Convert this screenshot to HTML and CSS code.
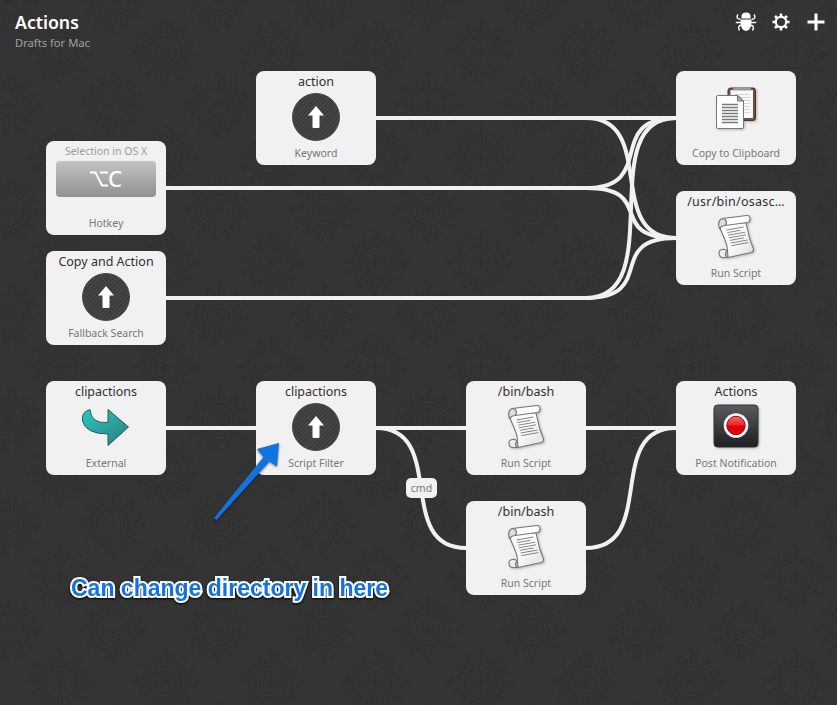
FILE: index.html
```html
<!DOCTYPE html>
<html lang="en">
<head>
<meta charset="utf-8">
<title>Actions</title>
<link rel="stylesheet" href="styles.css">
</head>
<body>
<svg class="backdrop" width="837" height="705" aria-hidden="true">
  <defs>
    <g id="rosette" fill="none" stroke="#2d2d2d">
      <circle r="16" stroke-width="3" stroke-dasharray="2 1.3"/>
      <circle r="11" stroke-width="1"/>
      <circle r="22" stroke-width="6" stroke-dasharray="4 2" opacity=".55"/>
      <circle r="28" stroke-width="5" stroke-dasharray="7 7.7" opacity=".5"/>
      <path d="M-9 0H9M0-9V9M-6-6 6 6M-6 6 6-6M-35 0h9M26 0h9M0-35v9M0 26v9M-33-3l4 3-4 3M33-3l-4 3 4 3M-3-33l3 4 3-4M-3 33l3-4 3 4"/>
      <path d="M-30-20l6 4M-20-30l4 6M30-20l-6 4M20-30l-4 6M-30 20l6-4M-20 30l4-6M30 20l-6-4M20 30l-4-6" opacity=".7"/>
    </g>
    <pattern id="damask" width="105" height="105" x="8" y="0" patternUnits="userSpaceOnUse">
      <use href="#rosette"/><use href="#rosette" x="105"/>
      <use href="#rosette" y="105"/><use href="#rosette" x="105" y="105"/>
      <use href="#rosette" x="52.5" y="52.5"/>
    </pattern>
    <pattern id="stripes" width="3" height="3" patternUnits="userSpaceOnUse" patternTransform="rotate(45)">
      <rect width="3" height="3" fill="#393939"/><rect width="1.2" height="3" fill="#4a4a4a"/>
    </pattern>
    <linearGradient id="paper" x2="1" y2="1"><stop stop-color="#fff"/><stop offset=".55" stop-color="#fafafa"/><stop offset="1" stop-color="#dcdcdc"/></linearGradient>
    <linearGradient id="teal" x2="1" y2="1"><stop stop-color="#2ac5c0"/><stop offset="1" stop-color="#2b7f7c"/></linearGradient>
    <linearGradient id="panel" x2="0" y2="1"><stop stop-color="#5a5b5f"/><stop offset="1" stop-color="#1d1e20"/></linearGradient>
    <linearGradient id="red" x2="0" y2="1"><stop stop-color="#f76b6b"/><stop offset=".48" stop-color="#ee2028"/><stop offset=".52" stop-color="#dc0008"/><stop offset="1" stop-color="#e8000c"/></linearGradient>
    <symbol id="up" viewBox="0 0 48 48">
      <circle cx="24" cy="24" r="23.5" fill="url(#stripes)" stroke="#4b4b4b"/>
      <path d="M24 13l8 9.500h-4.500V34q0 1-1 1h-5q-1 0-1-1V22.500H16z" fill="#fff"/>
    </symbol>
    <symbol id="scroll" viewBox="0 0 48 48">
      <g stroke="#777" stroke-width="1.1" stroke-linejoin="round">
        <path d="M10.500 5.500C5 8 7 13 9 17.500 13 27 16 32 15.500 38L16 44.500 39.500 39.500Q42.500 38 41 34.500 39 30 37.500 25L34 10 13 9z" fill="url(#paper)"/>
        <path d="M15 38C13 35.500 7 36 7 39.500S8 44.500 11 44.500h5c-3-.5-3.500-4.500-1-6.500z" fill="#eee"/>
        <path d="M10.500 5.500 35 2.500c4-.3 4 6 .5 7L13 12.500c2-2 2-6-2.500-7z" fill="#fff"/>
        <path d="M10.500 5.500c4 0 5 5 2.500 7-2 0-4 1-5.500 3-1-3-2-8 3-10z" fill="#ddd"/>
      </g>
      <path d="M14.500 17l17-3M15.300 19.600l13-2.300M16.200 22.200l17-3M17 24.800l17-3M17.800 27.400l14-2.500M18.600 30l17-3M19.300 32.600l17-3" stroke="#777" stroke-width=".9"/>
    </symbol>
  </defs>
  <rect width="837" height="705" fill="url(#damask)"/>
</svg>

<header class="bar">
  <div class="heading">
    <h1>Actions</h1>
    <p>Drafts for Mac</p>
  </div>
  <nav class="tools">
    <svg width="22" height="22" viewBox="0 0 22 22"><path d="M6.500 6Q6 1.500 11 1.500T15.500 6v1.500h-9zM5.500 8.500h11q.3 11.500-5.500 11.500T5.500 8.500z" fill="#fff"/><path d="M3 3.500Q0 7.500 5.500 8.500M19 3.500q3 4-2.500 5M.8 11.500H7M21.200 11.500H15M7 14.500H5q-2.500 1-.5 5M15 14.500h2q2.500 1 .5 5" fill="none" stroke="#fff" stroke-width="1.400"/></svg>
    <svg width="18" height="18" viewBox="0 0 18 18" fill="none" stroke="#fff"><circle cx="9" cy="9" r="5.200" stroke-width="2.200"/><path d="M9 .5v3M9 14.500v3M.5 9h3M14.500 9h3M3 3l2 2M13 13l2 2M15 3l-2 2M5 13l-2 2" stroke-width="2.600"/></svg>
    <svg width="18" height="18" viewBox="0 0 18 18"><path d="M9 .5v17M.5 9h17" stroke="#fff" stroke-width="3"/></svg>
  </nav>
</header>

<main class="canvas">
  <svg class="wires" width="837" height="705" aria-hidden="true">
    <path d="M376 118H676M166 188H586M166 298H586M166 428H256M376 428H466M586 428H676"/>
    <path d="M586 118C658 118 604 238 676 238"/>
    <path d="M586 188C658 188 604 118 676 118"/>
    <path d="M586 188C658 188 604 238 676 238"/>
    <path d="M586 298C670 298 592 118 676 118"/>
    <path d="M586 298C658 298 604 238 676 238"/>
    <path d="M376 428C448 428 394 548 466 548"/>
    <path d="M586 548C658 548 604 428 676 428"/>
  </svg>

  <section class="node col2 row-keyword"><h2>action</h2><svg class="icon"><use href="#up"/></svg><p>Keyword</p></section>
  <section class="node col1 row-hotkey"><h2 class="muted">Selection in OS X</h2><div class="key"><svg width="18" height="16" viewBox="0 0 18 16" fill="none" stroke="#fff" stroke-width="2"><path d="M0 1.500h5.500l6.500 13h6M10 1.500h8"/></svg><span>C</span></div><p>Hotkey</p></section>
  <section class="node col1 row-fallback"><h2>Copy and Action</h2><svg class="icon"><use href="#up"/></svg><p>Fallback Search</p></section>
  <section class="node col4 row-keyword"><h2></h2>
    <svg class="icon soft" viewBox="0 0 48 48">
      <rect x="16" y="-5" width="27.500" height="32.500" rx="2.500" fill="#70503a" stroke="#513624"/>
      <path d="M18.500-3H41V25H18.500z" fill="#fafafa"/>
      <path d="M21.500-5.500h17l1 3h-19z" fill="#999"/>
      <path d="M23 1.500h15M23 4.500h15M23 7.500h15M23 10.500h15M23 13.500h15M23 16.500h15M23 19.500h15" stroke="#d4d4d4"/>
      <path d="M6 2.500h20L31.500 8v26q0 1.500-1.500 1.500H6q-1.500 0-1.500-1.500V4Q4.500 2.500 6 2.500z" fill="#fff" stroke="#777"/>
      <path d="M25.500 2.500V8h6z" fill="#aaa" stroke="#777"/>
      <path d="M10 11.500h16M10 14.500h16M10 17.500h16M10 20.500h16M10 23.500h16M10 26.500h16M10 29.500h16" stroke="#777" stroke-width="1.500"/>
    </svg><p>Copy to Clipboard</p></section>
  <section class="node col4 row-osa"><h2 class="wide">/usr/bin/osasc…</h2><svg class="icon soft"><use href="#scroll"/></svg><p>Run Script</p></section>
  <section class="node col1 row-main"><h2>clipactions</h2><svg class="icon" viewBox="0 0 48 48"><path d="M8 6.500Q-1 9 .5 18 4 31 26 31v11.500L46.500 24 26 6.500V19.500Q9 21 8 6.500z" fill="url(#teal)" stroke="#235f60"/></svg><p>External</p></section>
  <section class="node col2 row-main"><h2>clipactions</h2><svg class="icon"><use href="#up"/></svg><p>Script Filter</p></section>
  <section class="node col3 row-main"><h2>/bin/bash</h2><svg class="icon soft"><use href="#scroll"/></svg><p>Run Script</p></section>
  <section class="node col4 row-main"><h2>Actions</h2><svg class="icon soft" viewBox="0 0 48 48"><rect x="2" y="2" width="44" height="42" rx="3.500" fill="url(#panel)" stroke="#333"/><circle cx="24" cy="22.500" r="12.300" fill="#f5f5f5"/><circle cx="24" cy="22.500" r="9.200" fill="url(#red)" stroke="#8f1018"/></svg><p>Post Notification</p></section>
  <section class="node col3 row-sub"><h2>/bin/bash</h2><svg class="icon soft"><use href="#scroll"/></svg><p>Run Script</p></section>

  <span class="modifier">cmd</span>
  <svg class="pointer" width="837" height="705" aria-hidden="true"><path d="M214 518L263.500 457 257 449 279 443 277 466.500 269.500 461.500 216.500 520z" fill="#1273e0"/></svg>
  <div class="note">Can change directory in here</div>
</main>
</body>
</html>
```
FILE: styles.css
```css
* { box-sizing: border-box; }
html, body { margin: 0; width: 837px; height: 705px; overflow: hidden; }
body { position: relative; background: #343434; font-family: "Noto Sans", sans-serif; }
h1, h2, p { margin: 0; font-weight: 400; }
.backdrop, .wires, .pointer { position: absolute; left: 0; top: 0; }
.backdrop { opacity: .6; }
.bar { position: relative; z-index: 1; display: flex; justify-content: space-between; padding: 10px 12px 0 15px; }
.heading h1 { font-size: 17.7px; line-height: 24px; font-weight: 600; color: #fff; }
.heading p { font-size: 11.2px; line-height: 17px; color: #a0a0a0; }
.tools { display: flex; gap: 17px; align-items: center; height: 24px; }
.tools svg:first-child { margin-right: -2px; }
.canvas { position: absolute; left: 0; top: 0; width: 837px; height: 705px; }
.wires path { fill: none; stroke: #f1f1f1; stroke-width: 4; }
.node { position: absolute; width: 120px; height: 94px; border-radius: 8px; background: #f1f1f1; display: flex; flex-direction: column; align-items: center; white-space: nowrap; }
.col1 { left: 46px; } .col2 { left: 256px; } .col3 { left: 466px; } .col4 { left: 676px; }
.row-keyword { top: 71px; } .row-hotkey { top: 141px; } .row-osa { top: 191px; }
.row-fallback { top: 251px; } .row-main { top: 381px; } .row-sub { top: 501px; }
.node h2 { height: 22px; font-size: 12.5px; line-height: 21px; color: #303030; }
.node h2.wide { letter-spacing: .25px; }
.node h2.muted { height: 20px; font-size: 10.5px; color: #9c9c9c; }
.node p { font-size: 10.5px; line-height: 14px; margin-top: 5px; color: #777; }
.icon { width: 48px; height: 48px; overflow: visible; flex: none; }
.soft { filter: drop-shadow(1px 1px 1px rgba(0, 0, 0, .25)); }
.key { width: 100px; height: 36px; margin-bottom: 14px; border-radius: 4px; background: linear-gradient(#c3c3c3, #919191); color: #fff; display: flex; align-items: center; justify-content: center; gap: 0; font-size: 22px; line-height: 34px; font-weight: 500; }
.key span { margin-top: -3px; }
.modifier { position: absolute; left: 406px; top: 478px; width: 31px; height: 20px; border-radius: 5px; background: #f1f1f1; color: #777; font-size: 10.5px; line-height: 20px; text-align: center; }
.pointer { filter: drop-shadow(0 1px 1px rgba(0, 0, 0, .5)); }
.note { position: absolute; left: 71px; top: 574px; font: bold 23px/28px "Liberation Sans", sans-serif; color: #1273e0; -webkit-text-stroke: 4px #fff; stroke-linejoin: round; paint-order: stroke fill; filter: drop-shadow(0 1px 1px #000); white-space: nowrap; }
```
